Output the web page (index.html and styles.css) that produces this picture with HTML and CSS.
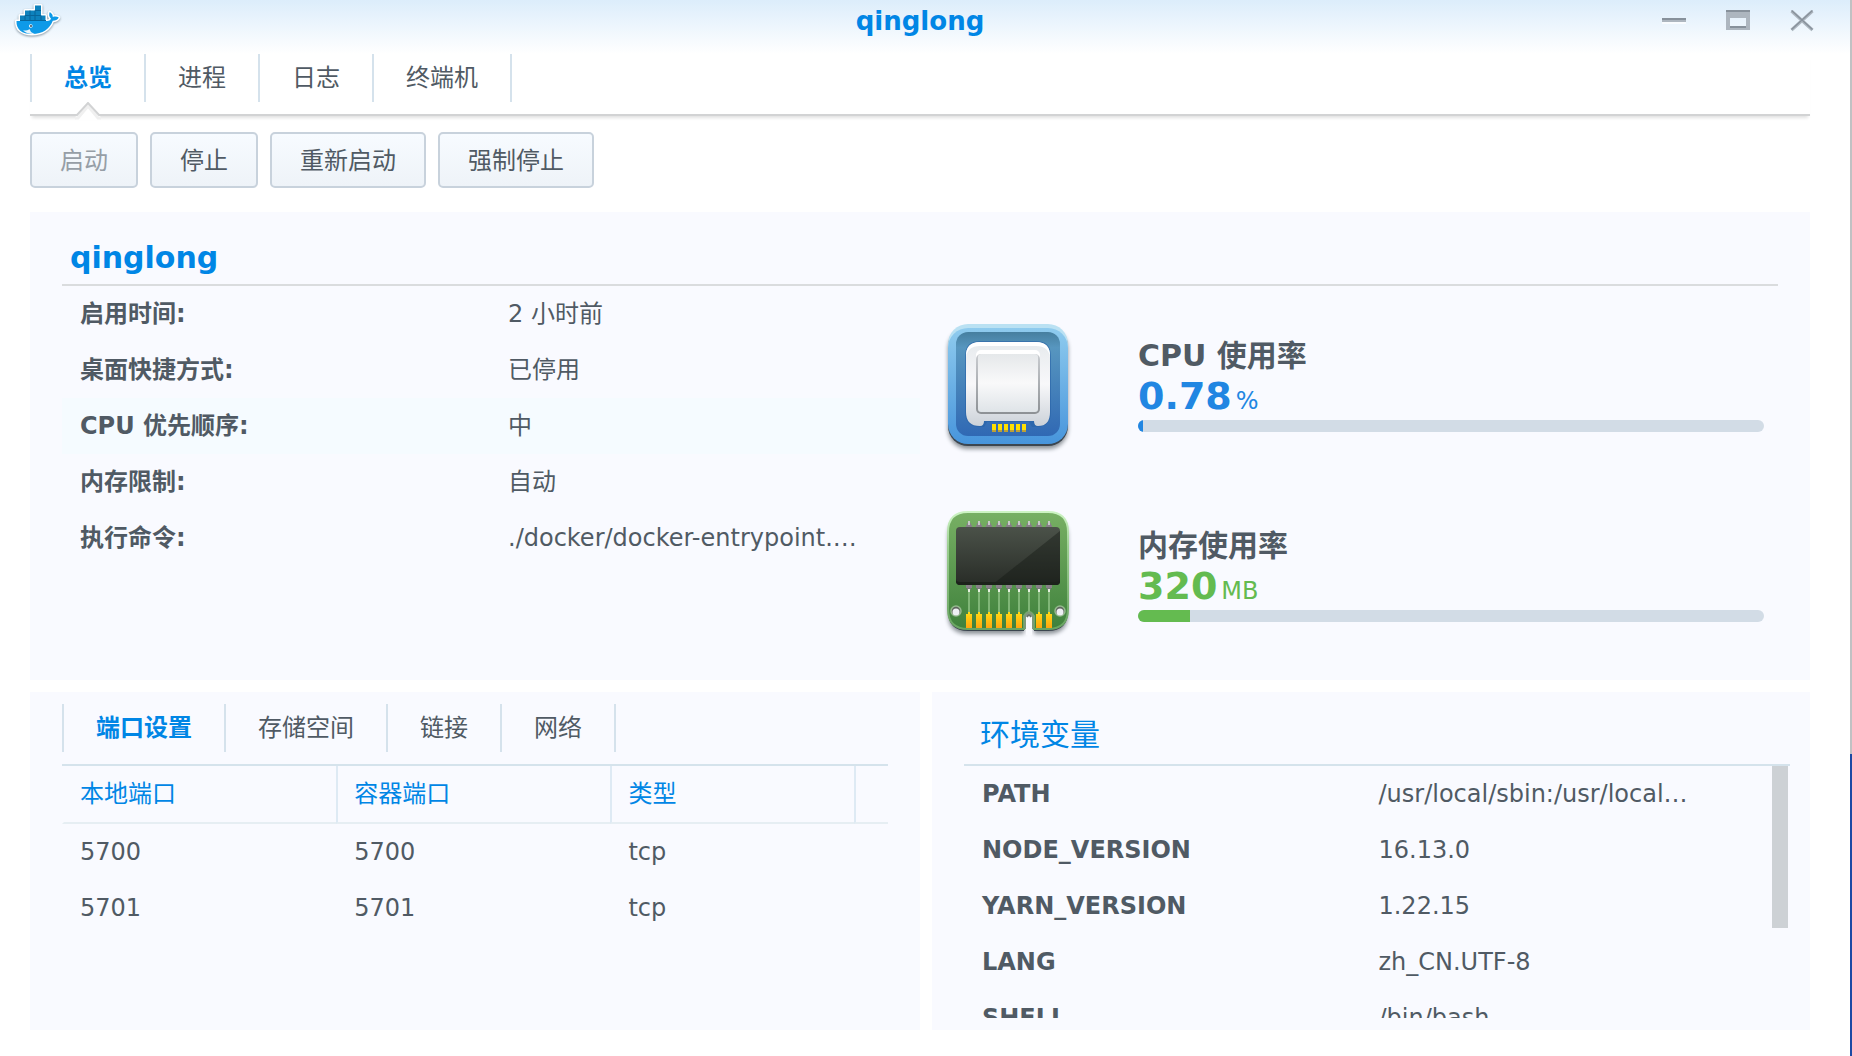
FILE: index.html
```html
<!DOCTYPE html>
<html lang="zh-CN">
<head>
<meta charset="utf-8">
<title>qinglong</title>
<link rel="stylesheet" href="styles.css">
</head>
<body>
<div class="window">
  <header class="titlebar">
    <svg class="logo" viewBox="0 0 48 36" width="48" height="36" aria-hidden="true">
      <defs>
        <path id="whale" d="M3.500 19H34c2 0 3.200-1 4-2.300-2-2-2.300-4.500-1.200-6.700 2.200 1.500 3 3 3 5 2-.8 4.200-.6 6 .6-1.200 2.200-3.300 3.200-6 3.200C36.500 27 30 32 19 32 9 32 3 27.500 3.500 19z"/>
        <path id="crates" d="M7 13.500h5V8.500h10V3.500h6v10h4.500V19H7z"/>
      </defs>
      <g class="whale-outline"><use href="#whale"/><use href="#crates"/></g>
      <use href="#crates" fill="#0d82bd"/>
      <path class="crate-line" d="M12 13.500V19M17 8.500V19M22 8.500V19M28 13.500V19M12 13.500h16M22 8.500h6M7 18.500h26"/>
      <use href="#whale" fill="#0e9ae8"/>
      <path class="belly" d="M10 28.500c2.500.3 5-.2 6.500-1.500l1.500 3 3.500 2C17 32.300 13 31.300 10 28.500z"/>
      <circle cx="17.800" cy="24" r="1.800" fill="#fff"/><circle cx="18" cy="24" r=".9" fill="#234"/>
    </svg>
    <h1 class="window-title">qinglong</h1>
    <div class="window-controls">
      <button type="button" aria-label="最小化"><svg viewBox="0 0 24 24" width="24" height="24"><path fill="#fff" opacity=".7" d="M0 12h24v2H0z"/><path fill="#87919b" d="M0 8h24v2H0z"/><path fill="#adb6bf" d="M0 10h24v2H0z"/></svg></button>
      <button type="button" aria-label="最大化"><svg viewBox="0 0 24 24" width="24" height="24"><path fill="#adb6bf" fill-rule="evenodd" d="M0 0h24v20H0zM4 8v10h16V8z"/><path fill="#87919b" d="M0 0h24v2H0zM4 16h16v2H4z"/></svg></button>
      <button type="button" aria-label="关闭"><svg viewBox="0 0 24 24" width="24" height="24"><path d="M1.500 1l21 19M22.500 1l-21 19" stroke="#adb6bf" stroke-width="3.200"/><path d="M1.500 .5l21 19M22.500 .5l-21 19" stroke="#87919b" stroke-width="1.300"/></svg></button>
    </div>
  </header>

  <nav class="tabs main-tabs">
    <a class="tab active" href="#overview">总览<svg class="tab-arrow" viewBox="0 0 28 18" width="28" height="18" aria-hidden="true"><path d="M2 18v-6h1L14 1l11 11h1v6z" fill="#fff"/><path d="M1 16h3L14 4l10 12h3" fill="none" stroke="#f0f0f0" stroke-width="3"/><path d="M1 13h2L14 1l11 12h2" fill="none" stroke="#d2d3d4" stroke-width="2"/></svg></a>
    <a class="tab" href="#process">进程</a>
    <a class="tab" href="#log">日志</a>
    <a class="tab" href="#terminal">终端机</a>
  </nav>

  <main class="content">
    <div class="toolbar">
      <button class="btn" type="button" disabled>启动</button>
      <button class="btn" type="button">停止</button>
      <button class="btn" type="button">重新启动</button>
      <button class="btn" type="button">强制停止</button>
    </div>

    <section class="panel summary">
      <h2 class="summary-title">qinglong</h2>
      <div class="summary-body">
        <dl class="info">
          <div class="info-row"><dt>启用时间:</dt><dd>2 小时前</dd></div>
          <div class="info-row"><dt>桌面快捷方式:</dt><dd>已停用</dd></div>
          <div class="info-row hover"><dt>CPU 优先顺序:</dt><dd>中</dd></div>
          <div class="info-row"><dt>内存限制:</dt><dd>自动</dd></div>
          <div class="info-row"><dt>执行命令:</dt><dd>./docker/docker-entrypoint.…</dd></div>
        </dl>
        <div class="metrics">
          <div class="metric">
            <svg class="metric-icon" viewBox="0 0 124 128" width="124" height="128" aria-hidden="true">
              <defs>
                <linearGradient id="frame" x2="0" y2="1"><stop offset="0" stop-color="#8fcbee"/><stop offset="1" stop-color="#4795dc"/></linearGradient>
                <linearGradient id="well" x2="0" y2="1"><stop offset="0" stop-color="#467f9f"/><stop offset=".15" stop-color="#5796bf"/><stop offset="1" stop-color="#3069b4"/></linearGradient>
                <linearGradient id="chip" x2="0" y2="1"><stop offset="0" stop-color="#e6eaed"/><stop offset=".5" stop-color="#f8f8fa"/><stop offset="1" stop-color="#ccd2d9"/></linearGradient>
                <linearGradient id="lid" x2="0" y2="1"><stop offset="0" stop-color="#e5e8ea"/><stop offset=".5" stop-color="#f9f9fa"/><stop offset="1" stop-color="#dfe4e8"/></linearGradient>
                <linearGradient id="rim" x2="0" y2="1"><stop offset="0" stop-color="#c9ccd0"/><stop offset="1" stop-color="#8d9195"/></linearGradient>
              </defs>
              <rect class="icon-shadow" x="2" y="2" width="120" height="120" rx="20"/>
              <rect x="2" y="0" width="120" height="110" rx="20" fill="#bae1f3"/>
              <rect x="2" y="4" width="120" height="116" rx="20" fill="url(#frame)"/>
              <rect x="10" y="8" width="104" height="104" rx="12" fill="url(#well)"/>
              <path d="M34 17h56q15 0 15 15v56q0 15-15 15h-4l-3-5H41l-3 5h-4q-15 0-15-15V32q0-15 15-15z" fill="#2863a7" opacity=".6"/>
              <path d="M34 18h56q14 0 14 14v56q0 14-12 14-4 0-4-5H38q0 5-4 5-14 0-14-14V32q0-14 14-14z" fill="url(#chip)"/>
              <path d="M20 34V32q0-14 14-14h56q14 0 14 14v2q-1-12-14-12H34q-13 0-14 12z" fill="#fff"/>
              <rect x="30" y="26" width="64" height="62" rx="5" fill="#fff"/>
              <rect x="30" y="30" width="64" height="60" rx="5" fill="url(#rim)"/>
              <rect x="32" y="30" width="60" height="58" rx="3" fill="url(#lid)"/>
              <path fill="#ffe000" d="M46 100h4v6h-4zM52 100h4v6h-4zM58 100h4v6h-4zM64 100h4v6h-4zM70 100h4v6h-4zM76 100h4v6h-4z"/>
              <path fill="#bda035" d="M46 106h4v2h-4zM52 106h4v2h-4zM58 106h4v2h-4zM64 106h4v2h-4zM70 106h4v2h-4zM76 106h4v2h-4z"/>
            </svg>
            <div class="metric-data">
              <h3>CPU 使用率</h3>
              <p class="metric-value cpu"><strong>0.78</strong>%</p>
              <div class="bar"><div class="bar-fill cpu" style="width:0.78%"></div></div>
            </div>
          </div>
          <div class="metric">
            <svg class="metric-icon" viewBox="0 3 124 128" width="124" height="128" aria-hidden="true">
              <defs>
                <linearGradient id="board" x2="0" y2="1"><stop offset="0" stop-color="#78b064"/><stop offset="1" stop-color="#3f813c"/></linearGradient>
                <linearGradient id="edge" x2="0" y2="1"><stop offset="0" stop-color="#cdf4c4"/><stop offset=".3" stop-color="#9ccf91"/><stop offset="1" stop-color="#69a461"/></linearGradient>
                <linearGradient id="die" x2="0" y2="1"><stop offset="0" stop-color="#4b5249"/><stop offset="1" stop-color="#282c27"/></linearGradient>
                <linearGradient id="gold" x2="0" y2="1"><stop offset="0" stop-color="#ffdc14"/><stop offset="1" stop-color="#ffa40f"/></linearGradient>
                <g id="pin"><path fill="#c6c8c6" d="M2 10h2v4H2z"/><path fill="#877f88" d="M1 12h1v2H1zM4 12h1v2H4zM0 14h6v3H0zM0 74h6v3H0z"/><path fill="#777" d="M1 77h4v2H1z"/><path fill="#80b677" d="M2 81h2v22H2z"/><path fill="#e4f1de" d="M2 78h2v3H2z"/></g>
                <path id="pad" fill="url(#gold)" d="M0 103h2v-2h2v2h2v14H0z"/>
              </defs>
              <path class="icon-shadow" d="M22 3h80q20 0 20 20v77q0 20-20 20H88v-14q-5-7-10 0v14H22q-20 0-20-20V23Q2 3 22 3z"/>
              <path d="M22 1h80q20 0 20 20v77q0 20-20 20H88v-13q-5-8-10 0v13H22q-20 0-20-20V21Q2 1 22 1z" fill="url(#board)" stroke="url(#edge)" stroke-width="2"/>
              <g><use href="#pin" x="20"/><use href="#pin" x="30"/><use href="#pin" x="40"/><use href="#pin" x="50"/><use href="#pin" x="60"/><use href="#pin" x="70"/><use href="#pin" x="80"/><use href="#pin" x="90"/><use href="#pin" x="100"/></g>
              <rect x="10" y="16" width="104" height="58" rx="4" fill="url(#die)"/>
              <path d="M114 20v50q0 4-4 4H46z" fill="#111712" opacity=".4"/>
              <path d="M10 68v2q0 4 4 4h96q4 0 4-4v-2q0 3-4 3H14q-4 0-4-3z" fill="#1c221b"/>
              <path d="M80 124v-18q3-4 6 0v18z" fill="#f9faff"/>
              <path d="M79 118v-13q4-7 8 0v13" fill="none" stroke="#7d9a79" stroke-width="2"/>
              <path d="M81 106q2-4 4 0" fill="none" stroke="#667466" stroke-width="2"/>
              <g><use href="#pad" x="20"/><use href="#pad" x="30"/><use href="#pad" x="40"/><use href="#pad" x="50"/><use href="#pad" x="60"/><use href="#pad" x="70"/><use href="#pad" x="90"/><use href="#pad" x="100"/></g>
              <g fill="#5f655f" stroke="#94b98d" stroke-width="1.500"><circle cx="10" cy="100" r="5"/><circle cx="114" cy="100" r="5"/></g>
              <g fill="#eef0f3"><circle cx="10" cy="101" r="3.500"/><circle cx="114" cy="101" r="3.500"/></g>
            </svg>
            <div class="metric-data">
              <h3>内存使用率</h3>
              <p class="metric-value memory"><strong>320</strong>MB</p>
              <div class="bar"><div class="bar-fill memory" style="width:8.3%"></div></div>
            </div>
          </div>
        </div>
      </div>
    </section>

    <div class="lower">
      <section class="panel ports">
        <nav class="tabs sub-tabs">
          <a class="tab active" href="#ports">端口设置</a>
          <a class="tab" href="#volumes">存储空间</a>
          <a class="tab" href="#links">链接</a>
          <a class="tab" href="#network">网络</a>
        </nav>
        <table class="port-table">
          <colgroup><col class="col-port"><col class="col-port"><col class="col-type"><col></colgroup>
          <thead><tr><th>本地端口</th><th>容器端口</th><th>类型</th><th></th></tr></thead>
          <tbody>
            <tr><td>5700</td><td>5700</td><td>tcp</td><td></td></tr>
            <tr><td>5701</td><td>5701</td><td>tcp</td><td></td></tr>
          </tbody>
        </table>
      </section>

      <section class="panel env">
        <h2 class="env-title">环境变量</h2>
        <div class="env-view">
          <table class="env-table">
            <tbody>
              <tr><th scope="row">PATH</th><td>/usr/local/sbin:/usr/local…</td></tr>
              <tr><th scope="row">NODE_VERSION</th><td>16.13.0</td></tr>
              <tr><th scope="row">YARN_VERSION</th><td>1.22.15</td></tr>
              <tr><th scope="row">LANG</th><td>zh_CN.UTF-8</td></tr>
              <tr><th scope="row">SHELL</th><td>/bin/bash</td></tr>
            </tbody>
          </table>
          <div class="scroll-thumb"></div>
        </div>
      </section>
    </div>
  </main>
</div>
</body>
</html>
```
FILE: styles.css
```css
* { box-sizing: border-box; }

body {
  margin: 0;
  min-height: 100vh;
  padding-right: 2px;
  background: linear-gradient(#c0c1c3 754px, #1c4aa4 754px);
  color: #505a64;
  font: 24px/56px Verdana, "DejaVu Sans", "Noto Sans CJK SC", sans-serif;
}

h1, h2, h3, p, dl, dd { margin: 0; }
a { color: inherit; text-decoration: none; }
button { font: inherit; color: inherit; }

.window {
  display: flex;
  flex-direction: column;
  min-height: 100vh;
  background: linear-gradient(#dcedfb, #fff 54px);
}

/* Title bar */
.titlebar {
  display: grid;
  grid-template-columns: 178px 1fr 188px;
  height: 54px;
}
.logo { margin: 2px 0 0 13px; overflow: visible; }
.whale-outline { fill: #fff; stroke: #fff; stroke-width: 3; stroke-linejoin: round; filter: drop-shadow(0 1px 1px #8797a3); }
.crate-line { fill: none; stroke: #07659a; stroke-width: 1; }
.belly { fill: #e8f5fc; }
.window-title {
  color: #0086e5;
  font-size: 26px;
  line-height: 42px;
  text-align: center;
}
.window-controls { display: flex; gap: 40px; padding-top: 10px; }
.window-controls button { width: 24px; height: 24px; padding: 0; border: 0; background: none; }
.window-controls svg { display: block; }

/* Tabs */
.tabs { display: flex; }
.tab {
  height: 48px;
  padding: 0 32px;
  border-left: 2px solid #d5e2ec;
  line-height: 48px;
}
.tab:last-child { border-right: 2px solid #d5e2ec; }
.tab.active { position: relative; color: #0086e5; font-weight: bold; }
.tab-arrow { position: absolute; top: 48px; left: 50%; margin-left: -14px; }
.main-tabs {
  height: 62px;
  margin: 0 40px 0 30px;
  border-bottom: 2px solid #d2d3d4;
  box-shadow: 0 4px 3px -2px #e2e2e2;
}

.content {
  display: flex;
  flex: 1;
  flex-direction: column;
  gap: 12px;
  padding: 16px 40px 26px 30px;
}

/* Actions */
.toolbar { display: flex; gap: 12px; margin-bottom: 12px; }
.btn {
  height: 56px;
  padding: 2px 28px 0;
  border: 2px solid #c8d2dc;
  border-radius: 5px;
  background: linear-gradient(#f7fbff, #eef3f8);
  line-height: 50px;
}
.btn:disabled { color: #969ea6; }

.panel { background: #f9faff; }

/* Container summary */
.summary { padding: 16px 32px 38px; }
.summary-title {
  height: 58px;
  padding-left: 8px;
  border-bottom: 2px solid #dadcde;
  color: #0086e5;
  font-size: 30px;
  line-height: 60px;
}
.summary-body { display: grid; grid-template-columns: 1fr 1fr; }
.info-row { display: grid; grid-template-columns: 1fr 1fr; height: 56px; padding-left: 18px; }
.info-row.hover { background: #f5fbff; }
.info dt { font-weight: bold; }
.info dd { padding-left: 8px; white-space: nowrap; overflow: hidden; text-overflow: ellipsis; }

.metrics { display: flex; flex-direction: column; gap: 62px; padding: 38px 14px 0 26px; }
.metric { display: flex; gap: 68px; height: 128px; }
.metric-icon { flex: none; overflow: visible; }
.icon-shadow { fill: #3c4650; filter: drop-shadow(0 3px 2px #8a9096); }
.metric-data { flex: 1; padding-top: 10px; }
.metric h3 { height: 44px; font-size: 30px; line-height: 44px; }
.metric-value { height: 42px; line-height: 36px; }
.metric-value strong { margin-right: 4px; font-size: 38px; }
.metric-value.cpu { color: #2186e2; }
.metric-value.memory { color: #64bb50; }
.bar { height: 12px; border-radius: 6px; background: #d2dce6; overflow: hidden; }
.bar-fill { height: 100%; }
.bar-fill.cpu { background: #2186e2; }
.bar-fill.memory { background: #64bb50; }

/* Lower panels */
.lower { display: grid; flex: 1; grid-template-columns: 890fr 878fr; gap: 12px; }
table { width: 100%; table-layout: fixed; border-collapse: separate; border-spacing: 0; text-align: left; }
th, td { height: 56px; padding: 0 0 0 16px; white-space: nowrap; }

.ports { padding: 12px 32px 0; }
.sub-tabs { height: 62px; border-bottom: 2px solid #d5e3ec; }
.col-port { width: 33.2%; }
.col-type { width: 29.5%; }
.port-table th {
  height: 58px;
  border-bottom: 2px solid #e6eef3;
  border-left: 2px solid #deeaf4;
  color: #0086e5;
  font-weight: normal;
}
.port-table td { border-left: 2px solid transparent; }
.port-table th:first-child { border-left-color: transparent; }

.env { padding: 12px 20px 12px 32px; }
.env-title {
  height: 62px;
  padding-left: 16px;
  border-bottom: 2px solid #d5e3ec;
  color: #0086e5;
  font-size: 30px;
  font-weight: normal;
  line-height: 62px;
}
.env-view { position: relative; height: 252px; overflow: hidden; }
.env-table th { width: 48%; padding-left: 18px; }
.env-table td { padding-left: 18px; }
.scroll-thumb {
  position: absolute;
  top: 0;
  right: 2px;
  width: 16px;
  height: 162px;
  background: #cdd1d5;
}
```
